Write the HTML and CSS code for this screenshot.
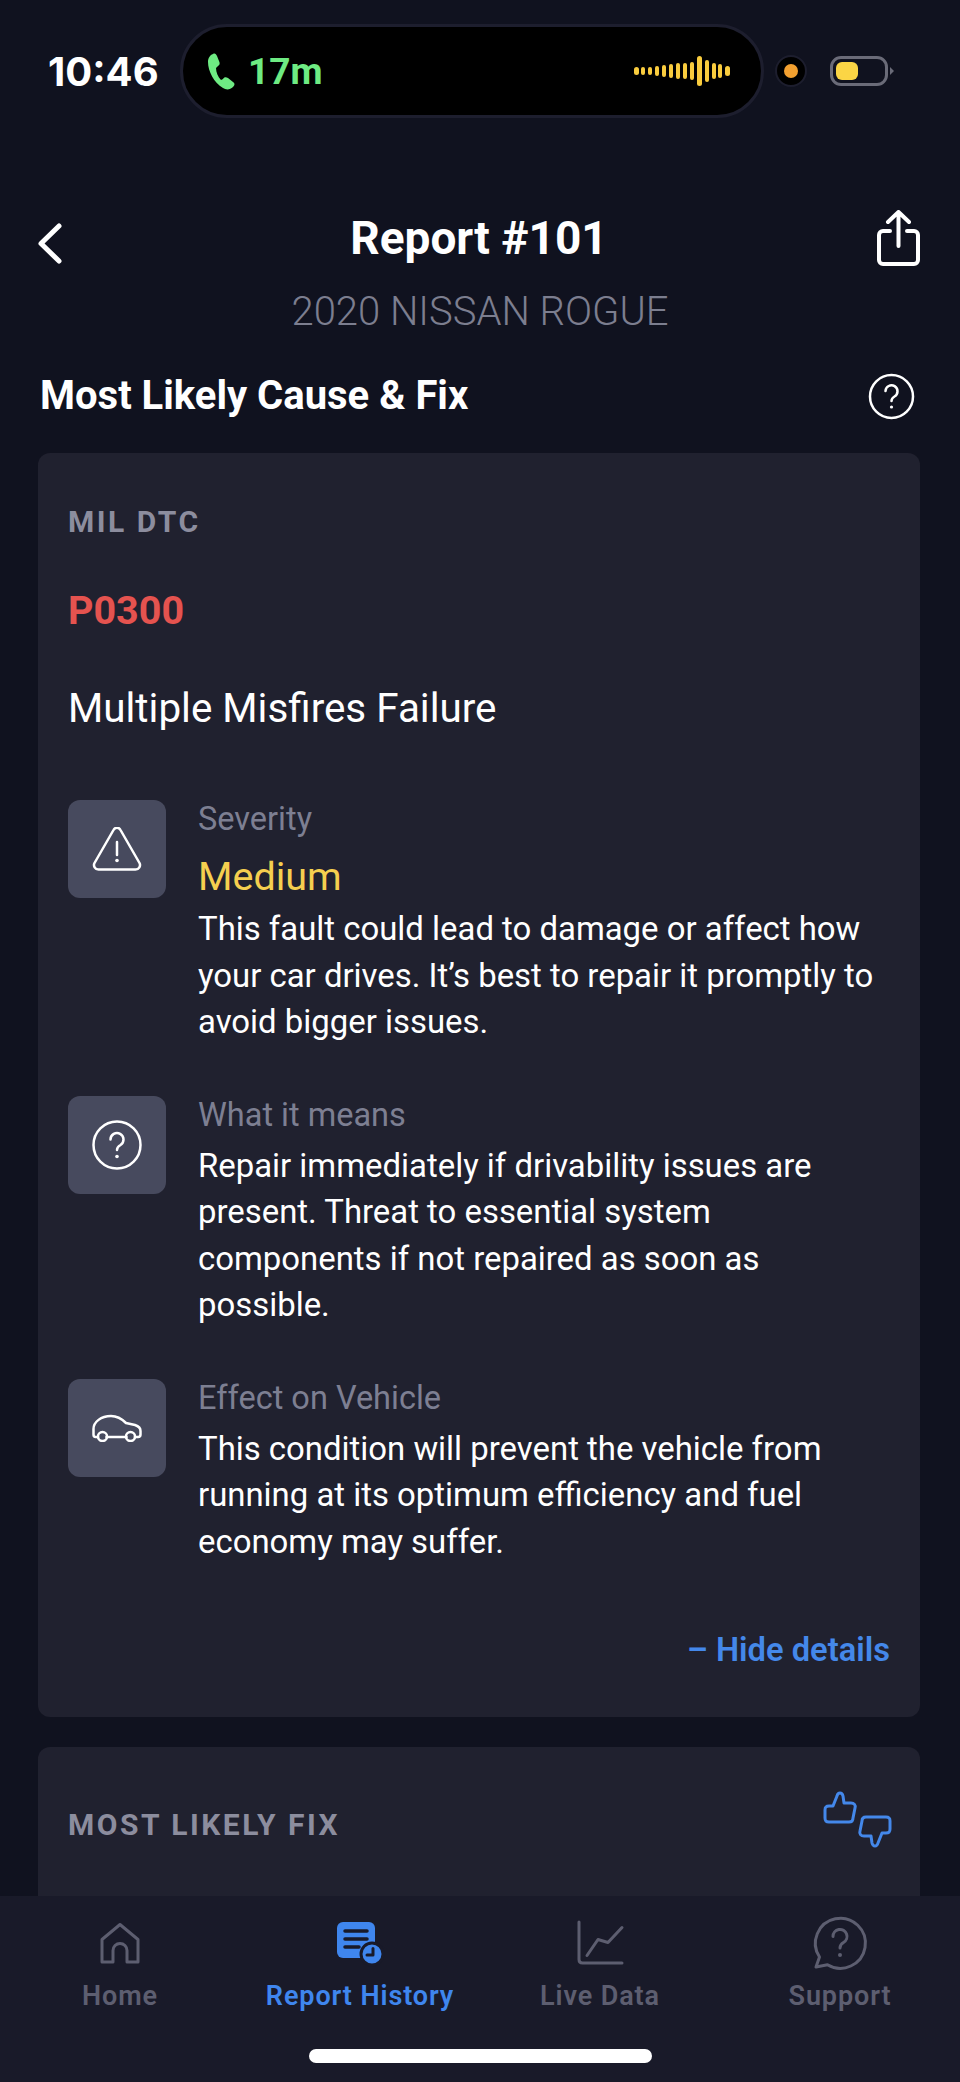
FILE: index.html
```html
<!DOCTYPE html>
<html lang="en">
<head>
    <meta charset="UTF-8">
    <meta name="viewport" content="width=device-width, initial-scale=1.0">
    <title>Report #101</title>
    <link rel="stylesheet" href="styles.css">
</head>
<body>
    <div class="screen">
        <div class="status-bar">
            <span class="clock">10:46</span>
            <div class="island">
                <svg class="phone" width="27" height="37" viewBox="0 0 27 37"><path d="M5 1C2 2 0 5 0 9c0 9 6 21 15 26 3 2 7 2 10-1 2-2 2-4 0-5l-5-4c-2-1-4-1-5 1l-2 1c-3-3-5-8-5-12l2-2c2-1 2-3 1-5L9 3C8 1 7 0 5 1z"/></svg>
                <span class="call-time">17m</span>
                <svg class="wave" width="96" height="30" viewBox="0 0 96 30">
                    <rect x="0" y="11" width="5" height="8" rx="2.5"/>
                    <rect x="7" y="11" width="4" height="8" rx="2"/>
                    <rect x="14" y="11" width="4" height="8" rx="2"/>
                    <rect x="21" y="10" width="4" height="10" rx="2"/>
                    <rect x="28" y="9" width="4" height="12" rx="2"/>
                    <rect x="35" y="8" width="4" height="14" rx="2"/>
                    <rect x="42" y="7" width="4" height="16" rx="2"/>
                    <rect x="49" y="7" width="4" height="16" rx="2"/>
                    <rect x="56" y="6" width="4" height="18" rx="2"/>
                    <rect x="63" y="0" width="5" height="30" rx="2.5"/>
                    <rect x="71" y="4" width="4" height="22" rx="2"/>
                    <rect x="78" y="7" width="4" height="16" rx="2"/>
                    <rect x="84" y="8" width="4" height="14" rx="2"/>
                    <rect x="91" y="10" width="5" height="10" rx="2.5"/>
                </svg>
            </div>
            <div class="cam-dot"><span></span></div>
            <div class="battery"><span></span></div>
            <span class="battery-nub"></span>
        </div>

        <div class="top-row">
            <svg class="back" width="24" height="41" viewBox="0 0 24 41"><path d="M21 3 3 20.5 21 38"/></svg>
            <h1>Report #101</h1>
            <svg class="share" width="43" height="56" viewBox="0 0 43 56"><path d="M21.500 36V3M11 12 21.500 2 32 12M13 21H6a4 4 0 0 0-4 4v25a4 4 0 0 0 4 4h31a4 4 0 0 0 4-4V25a4 4 0 0 0-4-4h-7"/></svg>
        </div>
        <div class="vehicle">2020 NISSAN ROGUE</div>

        <div class="section-row">
            <h2>Most Likely Cause &amp; Fix</h2>
            <svg class="help" width="47" height="47" viewBox="0 0 47 47">
                <circle cx="23.500" cy="23.500" r="21.500"/>
                <path d="M17.500 18a6 6 0 1 1 9 5.500c-2 1.200-3 2.300-3 4.500"/>
                <circle class="dot" cx="23.500" cy="34" r="1.600"/>
            </svg>
        </div>

        <main class="content">
            <section class="card">
                <div class="card-label">MIL DTC</div>
                <div class="dtc-code">P0300</div>
                <div class="dtc-name">Multiple Misfires Failure</div>

                <div class="detail">
                    <div class="detail-icon">
                        <svg width="50" height="44" viewBox="0 0 50 44"><path d="M21.500 3 2.500 36c-1.500 3 .5 6.500 4 6.500h37c3.500 0 5.500-3.500 4-6.500L28.500 3c-1.500-3-5.500-3-7 0z"/><path d="M25 15v13"/><circle class="dot" cx="25" cy="33.500" r="1.800"/></svg>
                    </div>
                    <div class="detail-body">
                        <div class="detail-label">Severity</div>
                        <div class="severity">Medium</div>
                        <p>This fault could lead to damage or affect how your car drives. It’s best to repair it promptly to avoid bigger issues.</p>
                    </div>
                </div>

                <div class="detail">
                    <div class="detail-icon">
                        <svg width="50" height="50" viewBox="0 0 50 50"><circle cx="25" cy="25" r="23.500"/><path d="M18.500 19.500a6.500 6.500 0 1 1 10 5.500c-2.200 1.300-3.500 2.500-3.500 5"/><circle class="dot" cx="25" cy="36.500" r="1.800"/></svg>
                    </div>
                    <div class="detail-body">
                        <div class="detail-label">What it means</div>
                        <p class="after-label">Repair immediately if drivability issues are present. Threat to essential system components if not repaired as soon as possible.</p>
                    </div>
                </div>

                <div class="detail">
                    <div class="detail-icon">
                        <svg width="50" height="28" viewBox="0 0 50 28"><path d="M6 23H3.500C2 23 1.500 22 1.500 20.500V15C1.500 8 9 2 19 2c6 0 11 3 15 7l9 2c3 1 5.500 3 5.500 6v3.500c0 1.500-1 2.500-2.500 2.500h-3M14.500 23H34.500"/><circle cx="10.500" cy="22.500" r="4.500"/><circle cx="38.500" cy="22.500" r="4.500"/></svg>
                    </div>
                    <div class="detail-body">
                        <div class="detail-label">Effect on Vehicle</div>
                        <p class="after-label">This condition will prevent the vehicle from running at its optimum efficiency and fuel economy may suffer.</p>
                    </div>
                </div>

                <div class="toggle">– Hide details</div>
            </section>

            <section class="card card-fix">
                <div class="fix-head">
                    <div class="card-label">MOST LIKELY FIX</div>
                    <svg class="thumbs" width="69" height="57" viewBox="0 0 69 57">
                        <path d="M6 15h4l4-10c1-4 5-4 6 0l1 7h7c3 0 5 2 4 5l-2 10c0 3-2 4-4 4H6c-3 0-4-1-4-4v-8c0-3 1-4 4-4z"/>
                        <path transform="translate(69 57) rotate(180)" d="M6 15h4l4-10c1-4 5-4 6 0l1 7h7c3 0 5 2 4 5l-2 10c0 3-2 4-4 4H6c-3 0-4-1-4-4v-8c0-3 1-4 4-4z"/>
                    </svg>
                </div>
            </section>
        </main>

        <nav class="tab-bar">
            <div class="tabs">
                <div class="tab">
                    <svg width="40" height="41" viewBox="0 0 40 41"><path d="M2 39.500V17L20 2l18 15v22.500H27V28a7 7 0 0 0-14 0v11.500z"/></svg>
                    <span>Home</span>
                </div>
                <div class="tab active">
                    <svg width="46" height="42" viewBox="0 0 46 42">
                        <rect class="fill" x="0" y="0" width="38" height="36" rx="6"/>
                        <path class="cut" d="M8 9h22M8 17h22M8 25h14"/>
                        <circle class="fill ring" cx="35" cy="32" r="11"/>
                        <path class="cut thin" d="M36 26.500V33h-6"/>
                    </svg>
                    <span>Report History</span>
                </div>
                <div class="tab">
                    <svg width="46" height="45" viewBox="0 0 46 45"><path d="M2 1.500V39c0 2 1 3.500 3.500 3.500H45"/><path d="M10 35l11-16 10 3L45 7"/></svg>
                    <span>Live Data</span>
                </div>
                <div class="tab">
                    <svg width="54" height="54" viewBox="0 0 54 54"><path d="M14.500 48.700A25 25 0 1 0 6.500 41L3 51z"/><path d="M20 20.500a7 7 0 1 1 10.500 6c-2.300 1.300-3.500 2.500-3.500 5.500"/><circle class="dot" cx="27" cy="39" r="2"/></svg>
                    <span>Support</span>
                </div>
            </div>
            <div class="home-indicator"></div>
        </nav>
    </div>
</body>
</html>
```

FILE: styles.css
```css
html, body {
    margin: 0;
    padding: 0;
}
body {
    font-family: 'Roboto', sans-serif;
    background-color: #10121F;
    color: #FFFFFF;
}
.screen {
    width: 960px;
    height: 2082px;
    display: flex;
    flex-direction: column;
    overflow: hidden;
}

/* status bar */
.status-bar {
    display: flex;
    align-items: center;
    height: 94px;
    margin-top: 24px;
    padding-left: 48px;
}
.clock {
    width: 132px;
    font-family: 'Inter', sans-serif;
    font-size: 40px;
    font-weight: 700;
}
.island {
    width: 584px;
    height: 94px;
    box-sizing: border-box;
    display: flex;
    align-items: center;
    padding: 0 31px 0 25px;
    background-color: #000000;
    border: 3px solid #1D1E2E;
    border-radius: 47px;
}
.phone {
    fill: #6EEB83;
}
.call-time {
    margin-left: 13px;
    font-size: 37px;
    font-weight: 700;
    color: #6EEB83;
}
.wave {
    margin-left: auto;
    fill: #F9CC3E;
}
.cam-dot {
    width: 32px;
    height: 32px;
    box-sizing: border-box;
    display: flex;
    align-items: center;
    justify-content: center;
    margin-left: 11px;
    background-color: #000000;
    border: 2px solid #1D1E2E;
    border-radius: 50%;
}
.cam-dot span {
    width: 14px;
    height: 14px;
    background-color: #F2A030;
    border-radius: 50%;
}
.battery {
    width: 58px;
    height: 30px;
    box-sizing: border-box;
    margin-left: 23px;
    padding: 3px;
    border: 3px solid #6A6B78;
    border-radius: 11px;
}
.battery span {
    display: block;
    width: 22px;
    height: 100%;
    background-color: #FBD545;
    border-radius: 6px;
}
.battery-nub {
    margin-left: 2px;
    border-top: 4px solid transparent;
    border-bottom: 4px solid transparent;
    border-left: 4px solid #6A6B78;
}

/* header */
.top-row {
    display: grid;
    grid-template-columns: 1fr auto 1fr;
    align-items: center;
    height: 56px;
    margin-top: 92px;
    padding: 0 40px 0 38px;
}
.back, .share, .help {
    fill: none;
    stroke: #FFFFFF;
    stroke-width: 4;
    stroke-linecap: round;
    stroke-linejoin: round;
}
.back {
    margin-top: 10px;
    stroke-width: 5;
}
.share {
    justify-self: end;
}
h1 {
    margin: 0;
    font-size: 46px;
    line-height: 48px;
    font-weight: 700;
}
.vehicle {
    margin-top: 24px;
    text-align: center;
    font-size: 40px;
    line-height: 44px;
    font-weight: 300;
    color: #7C7E8F;
}
.section-row {
    display: flex;
    align-items: center;
    justify-content: space-between;
    height: 48px;
    margin-top: 38px;
    padding: 0 45px 0 40px;
}
h2 {
    margin: 0;
    font-size: 40px;
    line-height: 48px;
    font-weight: 700;
}
.help {
    stroke-width: 2.5;
}
.dot {
    fill: currentColor;
    stroke: none;
}
.help .dot {
    fill: #FFFFFF;
}

/* cards */
.content {
    flex: 1;
    min-height: 0;
    overflow: hidden;
    padding: 33px 40px 0 38px;
}
.card {
    padding: 51px 30px 47px;
    background-color: #20212F;
    border-radius: 12px;
}
.card-label {
    font-size: 30px;
    line-height: 36px;
    font-weight: 700;
    letter-spacing: 2.500px;
    color: #8C8D9E;
}
.dtc-code {
    margin-top: 47px;
    font-size: 39.500px;
    line-height: 48px;
    font-weight: 700;
    color: #E5534F;
}
.dtc-name {
    margin-top: 50px;
    margin-bottom: 67px;
    font-size: 40.400px;
    line-height: 48px;
}
.detail {
    display: flex;
    gap: 32px;
    margin-bottom: 50px;
}
.detail-icon {
    flex: none;
    width: 98px;
    height: 98px;
    display: flex;
    align-items: center;
    justify-content: center;
    background-color: #474A5E;
    border-radius: 12px;
}
.detail-icon svg {
    fill: none;
    stroke: #FFFFFF;
    stroke-width: 2.5;
    stroke-linecap: round;
    stroke-linejoin: round;
}
.detail-icon .dot {
    fill: #FFFFFF;
}
.detail-label {
    font-size: 32.500px;
    line-height: 38px;
    color: #7D7F92;
}
.severity {
    margin-top: 16px;
    font-size: 39.500px;
    line-height: 46px;
    color: #F5CF4F;
}
.detail-body p {
    margin: 6px 0 0;
    font-size: 32.900px;
    line-height: 46.500px;
}
.detail-body p.after-label {
    margin-top: 9px;
}
.toggle {
    margin-top: 65px;
    text-align: right;
    font-size: 32.700px;
    line-height: 40px;
    font-weight: 600;
    color: #4488EA;
}
.card-fix {
    margin-top: 30px;
    padding: 44px 30px 200px;
}
.fix-head {
    display: flex;
    justify-content: space-between;
    align-items: flex-start;
}
.fix-head .card-label {
    margin-top: 16px;
}
.thumbs {
    margin-right: -2px;
    fill: none;
    stroke: #4488EA;
    stroke-width: 3;
    stroke-linejoin: round;
}

/* tab bar */
.tab-bar {
    flex: none;
    height: 186px;
    box-sizing: border-box;
    padding-top: 17px;
    background-color: #191A29;
}
.tabs {
    display: grid;
    grid-template-columns: repeat(4, 240px);
}
.tab {
    display: flex;
    flex-direction: column;
    align-items: center;
    color: #5D5E70;
}
.tab svg {
    height: 60px;
    overflow: visible;
    fill: none;
    stroke: currentColor;
    stroke-width: 3;
    stroke-linecap: round;
    stroke-linejoin: round;
}
.tab .dot {
    fill: currentColor;
}
.tab span {
    margin-top: 5px;
    font-size: 27px;
    line-height: 36px;
    font-weight: 600;
    letter-spacing: 0.900px;
}
.tab.active {
    color: #3F86EE;
}
.tab.active .fill {
    fill: #3F86EE;
    stroke: none;
}
.tab.active .ring {
    stroke: #191A29;
    stroke-width: 3;
}
.tab.active .cut {
    stroke: #191A29;
    stroke-width: 3.500;
}
.tab.active .thin {
    stroke-width: 3;
}
.home-indicator {
    width: 343px;
    height: 14px;
    margin: 35px auto 0;
    background-color: #FFFFFF;
    border-radius: 7px;
}
```
